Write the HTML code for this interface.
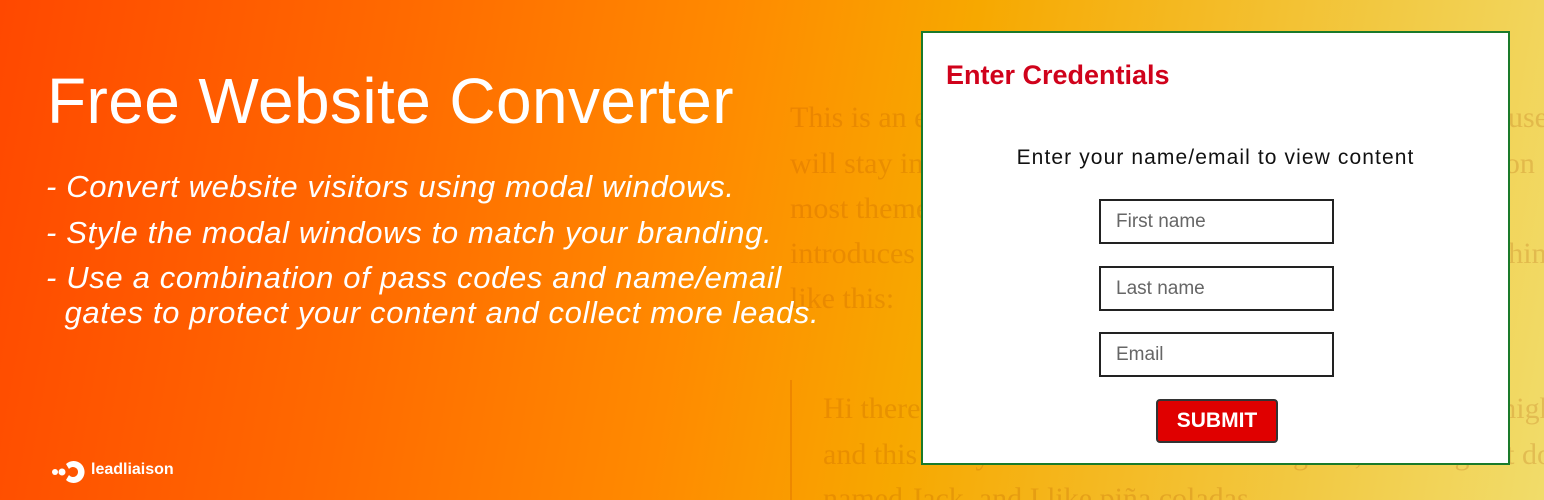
<!DOCTYPE html>
<html style="width:1544px;height:500px;overflow:hidden"><head><meta charset="utf-8"><style>
*{margin:0;padding:0;box-sizing:border-box}
body{width:1544px;height:500px;overflow:hidden;position:relative;font-family:"Liberation Sans",sans-serif;
background:linear-gradient(100deg,#ff4800 0%,#ff6a00 25%,#ff8a00 45%,#f7a800 60%,#f3c030 78%,#f1dc6a 100%);}
.bg{position:absolute;font-family:"Liberation Serif",serif;font-size:30px;color:rgba(170,70,0,0.2);white-space:nowrap}
h1{position:absolute;left:47px;top:64px;font-size:64px;font-weight:normal;color:#fff;letter-spacing:0.4px}
.b{position:absolute;left:46px;color:#fff;font-style:italic;font-size:31px;line-height:35px;letter-spacing:0.65px;white-space:nowrap}
.modal{position:absolute;left:921px;top:31px;width:589px;height:434px;background:#fff;border:2px solid #1a7a2a}
.t{position:absolute;left:23px;top:27px;font-size:27px;font-weight:bold;color:#d0021b}
.s{position:absolute;left:0;width:100%;top:113px;text-align:center;font-size:21px;letter-spacing:1.1px;color:#111}
.in{position:absolute;left:176px;width:235px;height:45px;border:2px solid #222;font-size:19px;color:#666;padding:10px 0 0 15px}
.btn{position:absolute;left:233px;top:366px;width:122px;height:44px;background:#e00000;border:2px solid #333;border-radius:4px;color:#fff;font-weight:bold;font-size:21px;text-align:center;line-height:40px}
.logo{position:absolute;color:#fff;font-weight:bold;font-size:16px}
</style></head><body>
<div class="bg" style="left:790px;top:101px">This is an example page. It's different from a blog post because it</div>
<div class="bg" style="left:790px;top:147px">will stay in one place and will show up in your site navigation</div>
<div class="bg" style="left:790px;top:192px">most themes. Most people start with an About page that</div>
<div class="bg" style="left:790px;top:237px">introduces them to potential site visitors. It might say something</div>
<div class="bg" style="left:790px;top:282px">like this:</div>
<div style="position:absolute;left:790px;top:380px;width:2px;height:120px;background:rgba(200,80,0,0.25)"></div>
<div class="bg" style="left:823px;top:392px">Hi there! I'm a bike messenger by day, aspiring actor by night,</div>
<div class="bg" style="left:823px;top:438px">and this is my website. I live in Los Angeles, have a great dog</div>
<div class="bg" style="left:823px;top:482px">named Jack, and I like piña coladas.</div>
<h1>Free Website Converter</h1>
<div class="b" style="top:169px">- Convert website visitors using modal windows.</div>
<div class="b" style="top:215px">- Style the modal windows to match your branding.</div>
<div class="b" style="top:260px">- Use a combination of pass codes and name/email<br>&nbsp;&nbsp;gates to protect your content and collect more leads.</div>
<div class="modal">
<div class="t">Enter Credentials</div>
<div class="s">Enter your name/email to view content</div>
<div class="in" style="top:166px">First name</div>
<div class="in" style="top:233px">Last name</div>
<div class="in" style="top:299px">Email</div>
<div class="btn">SUBMIT</div>
</div>
<svg style="position:absolute;left:52px;top:461px" width="36" height="22" viewBox="0 0 36 22">
<circle cx="3" cy="11" r="3" fill="#fff"/><circle cx="10" cy="11" r="3.5" fill="#fff"/>
<path d="M14 3 A11 11 0 1 1 14 19 L17 14 A5 5 0 1 0 17 8 Z" fill="#fff"/>
</svg>
<div class="logo" style="left:91px;top:461px">leadliaison</div>
</body></html>
